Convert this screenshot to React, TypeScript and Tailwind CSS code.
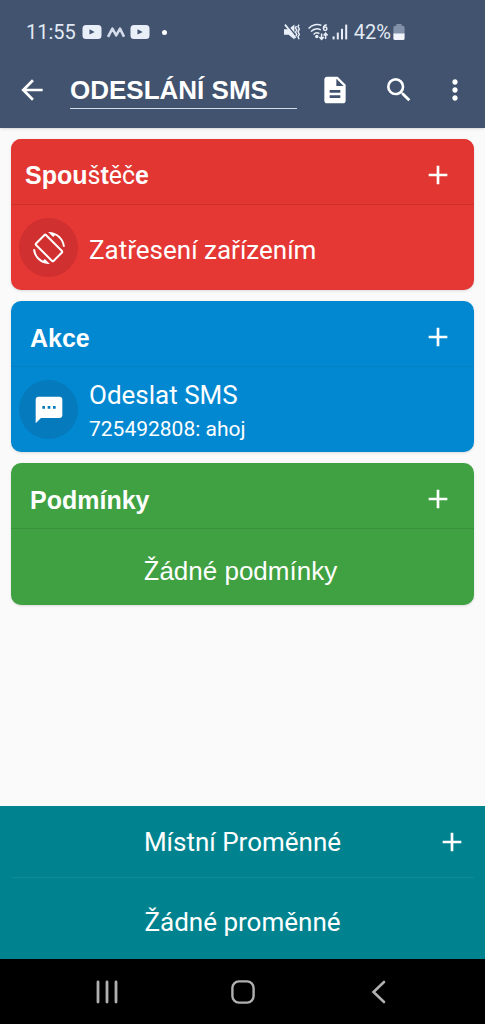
import React, { useState } from "react";
import {
  MdAdd,
  MdArrowBack,
  MdDescription,
  MdMoreVert,
  MdScreenRotation,
  MdSearch,
  MdSms,
} from "react-icons/md";

const YoutubeIcon = () => (
  <svg className="w-5 h-4" viewBox="0 0 20 16">
    <rect x="0.5" y="1" width="19" height="14" rx="3.5" fill="#e9eff8" />
    <path d="M7.5 5.2v5.4l5.2-2.7z" fill="#41536e" />
  </svg>
);

const WaveIcon = () => (
  <svg className="w-5 h-4" viewBox="0 0 20 16" fill="none" stroke="#d3dcea" strokeWidth={2.6}>
    <path d="M2 12.8 6.4 4.6l3.8 6.8L14 4.6l4 8.2" strokeLinejoin="round" />
  </svg>
);

const MuteIcon = () => (
  <svg className="w-4 h-5" viewBox="0 0 16 20">
    <path d="M0 7.2h4.6l5.8-4.8v15.2l-5.8-4.8H0z" fill="#e9eff8" />
    <path d="M2.4 2.2 12 13.8" stroke="#41536e" strokeWidth={1.4} />
    <path d="M1 2.6 11.6 16" stroke="#e9eff8" strokeWidth={1.8} />
    <path d="m12.4 4-1 2 1.4 2-1.4 2.2 1.4 2.2-1 2M15 2.6l-1 2.2 1.4 2.4L14 9.800l1.4 2.600-1.4 2.400 1 2.400" fill="none" stroke="#e9eff8" strokeWidth={1.4} />
  </svg>
);

const WifiIcon = () => (
  <svg className="w-5 h-5" viewBox="0 0 20 20" fill="none" stroke="#e9eff8" strokeWidth={1.5}>
    <path d="M0.6 6.6C4 2.6 9.4 1.6 13.4 3.4M3 9.6c2.8-3 6.6-3.6 9.8-1.8M5.6 12.4c1.6-1.8 3.8-2.2 5.8-.8" />
    <path d="M18.8 3.2c-2-.6-3.4.8-3.4 3.4" />
    <circle cx="17.2" cy="6.8" r="1.7" />
    <path d="M13.6 11.4v6M11.4 15l2.2 2.4 2.2-2.4M17.6 17v-5.4M15.6 13.4l2-2.2 2 2.2" />
    <circle cx="8.8" cy="14.6" r="1" fill="#e9eff8" />
  </svg>
);

const SignalIcon = () => (
  <svg className="w-4 h-5" viewBox="0 0 16 20" fill="#e9eff8">
    <rect x="0.6" y="14.4" width="2" height="3" />
    <rect x="4.8" y="10.6" width="2" height="6.8" />
    <rect x="9" y="6.8" width="2" height="10.6" />
    <rect x="13.2" y="2.6" width="2" height="14.8" />
  </svg>
);

const BatteryIcon = () => (
  <svg className="w-3 h-5" viewBox="0 0 12 20">
    <path d="M3.4 2h5.2v1.8H10a1.6 1.6 0 0 1 1.6 1.6V12H.4V5.4A1.6 1.6 0 0 1 2 3.8h1.4z" fill="#8391a8" />
    <path d="M.4 11.6h11.2v4.8A1.6 1.6 0 0 1 10 18H2a1.6 1.6 0 0 1-1.6-1.6z" fill="#f1f5fb" />
  </svg>
);

const StatusBar = () => (
  <div className="flex items-center justify-between h-13 pt-3 pl-[26px] pr-20 text-xl text-[#e1e9f4]">
    <div className="flex items-center gap-1">
      <span className="mr-0.5">11:55</span>
      <YoutubeIcon />
      <WaveIcon />
      <YoutubeIcon />
      <span className="w-[5px] h-[5px] ml-2 rounded-full bg-white" />
    </div>
    <div className="flex items-center">
      <MuteIcon />
      <span className="ml-2"><WifiIcon /></span>
      <span className="ml-1 mr-1.5"><SignalIcon /></span>
      <span className="mr-0.5">42%</span>
      <BatteryIcon />
    </div>
  </div>
);

const IconButton = ({ label, children }: { label: string; children: React.ReactNode }) => (
  <button type="button" aria-label={label} className="flex items-center justify-center w-8 h-8 shrink-0 text-white">
    {children}
  </button>
);

const Toolbar = () => {
  const [name, setName] = useState("ODESLÁNÍ SMS");

  return (
    <div className="flex items-center h-19 pl-4 pr-3.5">
      <IconButton label="Zpět"><MdArrowBack size={32} /></IconButton>
      <input
        type="text"
        aria-label="Název makra"
        value={name}
        onChange={(e) => setName(e.target.value)}
        className="flex-1 min-w-0 h-[38px] pt-0.5 ml-5.5 mr-5.5 border-b border-[#d5dbe4] bg-transparent font-['Liberation_Sans',sans-serif] text-[26px] font-bold text-white outline-none"
      />
      <div className="flex items-center">
        <IconButton label="Popis"><MdDescription size={32} /></IconButton>
        <span className="ml-8"><IconButton label="Hledat"><MdSearch size={32} /></IconButton></span>
        <span className="ml-6"><IconButton label="Další možnosti"><MdMoreVert size={32} /></IconButton></span>
      </div>
    </div>
  );
};

const Card = ({
  className,
  headClassName,
  title,
  addLabel,
  children,
}: {
  className: string;
  headClassName: string;
  title: React.ReactNode;
  addLabel: string;
  children: React.ReactNode;
}) => (
  <section className={`rounded-[10px] overflow-hidden text-white shadow-sm ${className}`}>
    <div className={`flex items-center justify-between h-[66px] pt-1.5 pr-5 border-b ${headClassName}`}>
      <h2 className="pt-0.5 font-['Liberation_Sans',sans-serif] text-[25px] leading-8 font-bold">{title}</h2>
      <IconButton label={addLabel}><MdAdd size={32} /></IconButton>
    </div>
    {children}
  </section>
);

const Item = ({
  icon,
  iconClassName,
  title,
  detail,
}: {
  icon: React.ReactNode;
  iconClassName: string;
  title: string;
  detail?: string;
}) => (
  <div className="flex items-center h-[85px] pl-2">
    <span className={`flex items-center justify-center w-[59px] h-[59px] shrink-0 rounded-full ${iconClassName}`}>
      {icon}
    </span>
    <div className={detail ? "ml-[11px] pt-0.5" : "ml-[11px] pt-1"}>
      <p className="text-[26px] leading-9">{title}</p>
      {detail && <p className="text-[21px] leading-8">{detail}</p>}
    </div>
  </div>
);

const NavBar = () => (
  <nav className="grid grid-cols-[1fr_58px_1fr] h-[65px] bg-black text-[#b0b0b0]">
    <button type="button" aria-label="Poslední aplikace" className="flex items-center justify-center">
      <svg className="w-6 h-6" viewBox="0 0 24 24" stroke="currentColor" strokeWidth={2.8} strokeLinecap="round">
        <path d="M3 2v20M12 2v20M21 2v20" />
      </svg>
    </button>
    <button type="button" aria-label="Domů" className="flex items-center justify-center">
      <svg className="w-6 h-6" viewBox="0 0 24 24" fill="none" stroke="currentColor" strokeWidth={2.4}>
        <rect x="1.4" y="1.4" width="21.2" height="21.2" rx="6.5" />
      </svg>
    </button>
    <button type="button" aria-label="Zpět" className="flex items-center justify-center">
      <svg className="w-6 h-6" viewBox="0 0 24 24" fill="none" stroke="currentColor" strokeWidth={2.6} strokeLinecap="round">
        <path d="M18 2 7.5 12 18 22" />
      </svg>
    </button>
  </nav>
);

const App: React.FC = () => {
  return (
    <div className="flex flex-col min-h-screen bg-[#fafafa] font-['Roboto',sans-serif]">
      <header className="bg-[#41536e] shadow-sm">
        <StatusBar />
        <Toolbar />
      </header>

      <main className="flex flex-col flex-1 gap-[11px] p-[11px]">
        <Card
          className="bg-[#e53835]"
          headClassName="pl-3.5 bg-[#e23632] border-[#cb302d]"
          addLabel="Přidat spouštěč"
          title={
            <>
              Spou<span className="font-['Roboto',sans-serif] font-normal">š</span>t
              <span className="font-['Roboto',sans-serif] font-normal">ěč</span>e
            </>
          }
        >
          <Item icon={<MdScreenRotation size={32} />} iconClassName="bg-[#d03030]" title="Zatřesení zařízením" />
        </Card>

        <Card
          className="bg-[#0288d1]"
          headClassName="pl-[19px] border-[#037fc4]"
          addLabel="Přidat akci"
          title="Akce"
        >
          <Item icon={<MdSms size={32} />} iconClassName="bg-[#057abc]" title="Odeslat SMS" detail="725492808: ahoj" />
        </Card>

        <Card
          className="bg-[#3fa142]"
          headClassName="pl-[19px] border-[#38923b]"
          addLabel="Přidat podmínku"
          title="Podmínky"
        >
          <p className="h-[76px] pt-[26px] pr-1 text-center font-['Liberation_Sans',sans-serif] text-[26px] leading-8">
            <span className="font-['Roboto',sans-serif]">Ž</span>ádné podmínky
          </p>
        </Card>
      </main>

      <footer className="text-white">
        <div className="bg-[#00838f] px-[11px]">
          <div className="grid grid-cols-[32px_1fr_32px] items-center h-[72px] px-1.5 border-b border-[#108b96]">
            <h2 className="col-start-2 text-center text-[26px] leading-8">Místní Proměnné</h2>
            <IconButton label="Přidat proměnnou"><MdAdd size={32} /></IconButton>
          </div>
          <p className="h-[81px] pt-7 text-center text-[26px] leading-8">Žádné proměnné</p>
        </div>
        <NavBar />
      </footer>
    </div>
  );
};

export default App;
